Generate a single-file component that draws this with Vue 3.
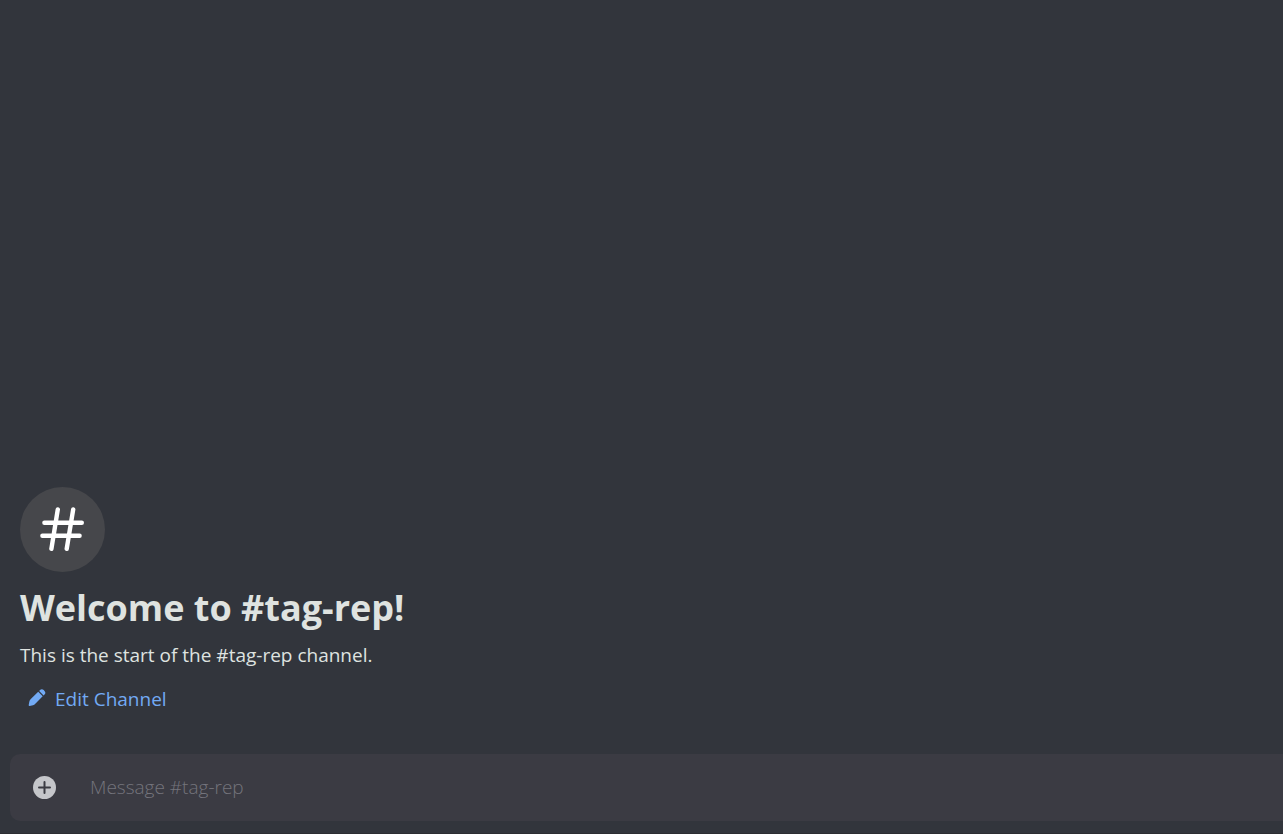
<template>
  <div class="chat">
    <main class="messages">
      <div class="channel-icon">
        <svg viewBox="0 0 45 45" width="45" height="45" aria-hidden="true">
          <path d="M17.8 2.4 11.4 41.8M33.2 2.4 26.7 41.8M4.4 15.8h37.4M2.4 28.7h37.2" />
        </svg>
      </div>
      <h1>Welcome to #{{ channel }}!</h1>
      <p>This is the start of the #{{ channel }} channel.</p>
      <button type="button" class="edit">
        <svg viewBox="0 0 18 18" width="18" height="18" aria-hidden="true">
          <path d="M11.2 1.9 12 1.1a2.6 2.6 0 0 1 3.7 0l.8.8a2.6 2.6 0 0 1 0 3.6l-.9.9zM10.2 2.8 14.7 7.3l-7.4 7.5c-.7.7-1.4 1.2-2.3 1.4l-3.4.8c-.6.1-1-.3-.9-.9l.6-3.3c.2-1.1.7-2 1.5-2.8z" />
        </svg>
        <span>Edit Channel</span>
      </button>
    </main>

    <form class="composer" @submit.prevent>
      <button type="button" class="attach" aria-label="Add attachment">
        <svg viewBox="0 0 23 23" width="23" height="23" aria-hidden="true">
          <circle cx="11.5" cy="11.5" r="11.5" />
          <path d="M11.5 6v11M6 11.5h11" />
        </svg>
      </button>
      <input v-model="message" type="text" :placeholder="`Message #${channel}`" :aria-label="`Message #${channel}`" />
    </form>
  </div>
</template>

<script setup>
import { ref } from 'vue'

const channel = 'tag-rep'
const message = ref('')
</script>

<style>
body {
  background: #32353c;
}
</style>

<style scoped>
.chat {
  display: flex;
  flex-direction: column;
  box-sizing: border-box;
  min-height: 100vh;
  padding: 0 0 12px 10px;
  border-bottom: 1px solid #2c2d32;
  background: #32353c;
  color: #dfe3e0;
  font-family: "Open Sans", "Noto Sans", sans-serif;
}
.messages {
  display: flex;
  flex: 1;
  flex-direction: column;
  align-items: flex-start;
  justify-content: flex-end;
  padding: 0 10px 43px;
}
.channel-icon {
  display: flex;
  align-items: center;
  justify-content: center;
  width: 85px;
  height: 85px;
  border-radius: 50%;
  background: #46474b;
}
.channel-icon path {
  fill: none;
  stroke: #fff;
  stroke-width: 4.4;
  stroke-linecap: round;
}
h1 {
  margin: 12px 0 11px;
  font-size: 36px;
  font-weight: 700;
  line-height: 48px;
}
p {
  margin: 0;
  font-size: 19px;
  line-height: 24px;
}
.edit {
  display: flex;
  align-items: center;
  gap: 9px;
  margin-top: 20px;
  padding: 0 8px;
  border: 0;
  background: none;
  color: #72aaf4;
  font: inherit;
  font-size: 19px;
  line-height: 24px;
  cursor: pointer;
}
.edit svg {
  margin-bottom: 2px;
  fill: #72aaf4;
}
.composer {
  display: flex;
  align-items: center;
  height: 67px;
  border-radius: 10px 0 0 10px;
  background: #3b3b43;
}
.attach {
  display: flex;
  margin: 0 34px 0 23px;
  padding: 0;
  border: 0;
  background: none;
  cursor: pointer;
}
.attach circle {
  fill: #c5c6ca;
}
.attach path {
  stroke: #3b3b43;
  stroke-width: 2;
  stroke-linecap: round;
}
input {
  flex: 1;
  min-width: 0;
  padding: 0 0 2px;
  border: 0;
  outline: 0;
  background: none;
  color: #dfe3e0;
  font: inherit;
  font-size: 19px;
  font-weight: 300;
  line-height: 24px;
}
input::placeholder {
  color: #74747c;
  opacity: 1;
}
</style>
